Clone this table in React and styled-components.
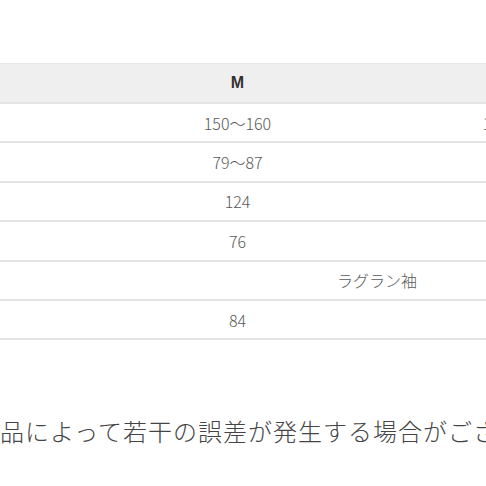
import React from 'react'
import styled, { createGlobalStyle } from 'styled-components'

const GlobalStyle = createGlobalStyle`
  html, body {
    margin: 0;
    padding: 0;
    background: #fff;
    overflow: hidden;
  }
  body {
    font-family: "Noto Sans CJK JP", "Noto Sans", sans-serif;
  }
`

// the page is wider than the window; the window only shows a slice of it
const Page = styled.div`
  width: 1400px;
  margin-left: -381px;
  padding-top: 63px;
`

const Table = styled.div`
  display: flex;
  flex-direction: column;
  border-top: 1px solid #e6e6e6;
`

const Row = styled.div`
  display: grid;
  grid-template-columns: 200px repeat(4, 279px);
  height: ${props => (props.head ? '40px' : '39.4px')};
  box-sizing: border-box;
  border-bottom: 2px solid #e4e4e4;
  background: ${props => (props.head ? '#efefef' : '#fff')};
`

const Cell = styled.div`
  display: flex;
  align-items: center;
  justify-content: center;
  grid-column: ${props => (props.span ? `span ${props.span}` : 'auto')};
  font-family: ${props => (props.head ? '"Liberation Sans", "Noto Sans CJK JP", sans-serif' : 'inherit')};
  font-size: ${props => (props.head ? '16px' : '16px')};
  font-weight: ${props => (props.head ? 700 : 300)};
  color: ${props => (props.head ? '#333' : '#595959')};
  white-space: nowrap;
`

const Note = styled.p`
  margin: 73px 0 0;
  padding-left: 331px;
  font-size: 24px;
  letter-spacing: 1px;
  line-height: 36px;
  font-weight: 300;
  color: #444;
  white-space: nowrap;
`

const sizes = ['S', 'M', 'L', 'XL']

const rows = [
  { label: '身長', values: ['140〜150', '150〜160', '160〜170', '170〜180'] },
  { label: 'バスト', values: ['71〜79', '79〜87', '87〜95', '95〜103'] },
  { label: '着丈', values: ['120', '124', '128', '132'] },
  { label: '身幅', values: ['72', '76', '80', '84'] },
  { label: '袖', span: 'ラグラン袖' },
  { label: 'ウエスト', values: ['80', '84', '88', '92'] }
]

export default function App () {
  return (
    <>
      <GlobalStyle />
      <Page>
        <Table>
          <Row head>
            <Cell head>サイズ</Cell>
            {sizes.map(s => <Cell head key={s}>{s}</Cell>)}
          </Row>
          {rows.map(r => (
            <Row key={r.label}>
              <Cell>{r.label}</Cell>
              {r.span
                ? <Cell span={4}>{r.span}</Cell>
                : r.values.map((v, i) => <Cell key={i}>{v}</Cell>)}
            </Row>
          ))}
        </Table>
        <Note>※製品によって若干の誤差が発生する場合がございます。</Note>
      </Page>
    </>
  )
}
